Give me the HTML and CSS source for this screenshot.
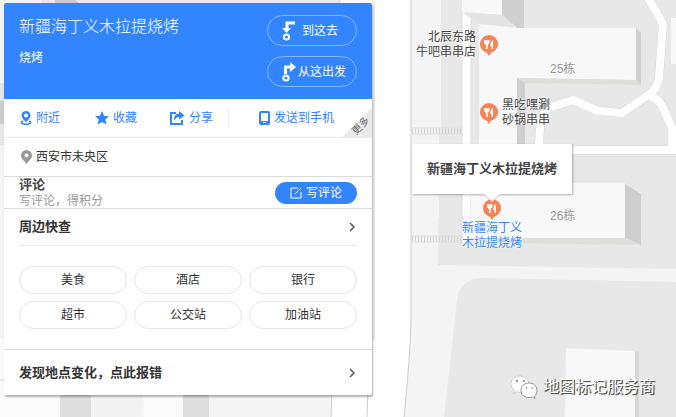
FILE: index.html
```html
<!DOCTYPE html>
<html lang="zh-CN">
<head>
    <meta charset="UTF-8">
    <meta name="viewport" content="width=device-width, initial-scale=1.0">
    <title>新疆海丁义木拉提烧烤</title>
    <link rel="stylesheet" href="styles.css">
</head>
<body>
    <svg class="map" viewBox="0 0 676 417" preserveAspectRatio="xMinYMin slice" aria-hidden="true">
        <rect width="676" height="417" fill="#ffffff"/>
        <!-- left block -->
        <path d="M0 0H339V417H0z" fill="#f4f4f4"/>
        <path d="M41 0H340V4H41z" fill="#e8e8e8"/>
        <path d="M55 0H75L80 4H55z" fill="#cccccc"/>
        <path d="M0 83H5V145H0z" fill="#e6e6e6"/>
        <path d="M0 101H5V124H0z" fill="#cccccc"/>
        <path d="M0 339H60V417H0zM143 390H183V417H144z" fill="#fbfbfb"/>
        <path d="M91 390H143V417H91z" fill="#f3f3f3"/>
        <path d="M60 390H91V417H60zM183 390H209V417H183z" fill="#dedede"/>
        <path d="M0 380H5" stroke="#cccccc"/>
        <path d="M332 390H368V417H331z" fill="#ffffff"/>
        <path d="M332 390L331 417M368 390L367 417" stroke="#cccccc" fill="none"/>
        <path d="M340 0V4M374 0V340" stroke="#d4d4d4" fill="none"/>

        <!-- right block -->
        <path d="M411 0H676V417H404Q410 360 411 320z" fill="#f4f4f4"/>
        <path d="M411 0V320Q410 360 404 417" stroke="#cccccc" fill="none"/>
        <path d="M441 0H676V269L438 265V218H439V130H441z" fill="#e8e8e8"/>
        <path d="M482 278L676 282V417H444L457 300Q460 279 482 278z" fill="#e8e8e8"/>
        <path d="M462 12H471V243H462z" fill="#ffffff"/>
        <path d="M462 12V243M471 15V243" stroke="#dddddd" fill="none"/>
        <path d="M412 131H462M412 239H462" stroke="#d6cfc9" stroke-width="5" stroke-dasharray="1 2"/>
        <path d="M412 128H462M412 134H462M412 236H462M412 242H462" stroke="#dddddd" fill="none"/>

        <!-- footpaths -->
        <g fill="none" stroke-linejoin="round">
            <path d="M647 -4L663 24L659 78Q657 90 647 96L622 113L598 111L573 100L548 108Q539 114 539 152M530 150H676M650 97Q659 98 663 108L672 128V152" stroke="#d8d8d8" stroke-width="9"/>
            <path d="M647 -4L663 24L659 78Q657 90 647 96L622 113L598 111L573 100L548 108Q539 114 539 150M530 150H676M650 97Q659 98 663 108L672 128V150" stroke="#ffffff" stroke-width="8"/>
        </g>

        <!-- buildings -->
        <path d="M462 0H502V15L462 12z" fill="#f8f8f8"/>
        <path d="M502 0H524V28H517L502 15z" fill="#cfcfcf"/>
        <path d="M462 12L502 15L517 27L479 24z" fill="#e4e4e2"/>
        <path d="M479 24L517 28H636V80L517 78V190H479z" fill="#f8f8f8"/>
        <path d="M636 28L641 33V85L636 80z" fill="#d0d0ce"/>
        <path d="M517 78L636 80L641 85L525 83z" fill="#dededb"/>
        <path d="M517 78L525 83V170H517z" fill="#cfcfcf"/>
        <path d="M671 18H676V64H671z" fill="#f8f8f8"/>
        <path d="M471 183H625V238H471z" fill="#f8f8f8"/>
        <path d="M625 184L641 194V245L625 238z" fill="#cecece"/>
        <path d="M471 238H625L641 245L482 243z" fill="#dededb"/>
        <path d="M566 348L635 351V417H565z" fill="#f8f8f8"/>
        <path d="M635 351L639 352V417H635z" fill="#d8d8d8"/>
    </svg>

    <svg class="symbols" aria-hidden="true">
        <symbol id="food" viewBox="0 0 18 21">
            <path d="M9 0A9 9 0 0 0 0 9C0 13 3 16.500 7 17.700L9 21L11 17.700C15 16.500 18 13 18 9A9 9 0 0 0 9 0z" fill="#f98353"/>
            <path d="M4 5H9.500V8L7.700 10V14H5.900V10L4 8zM13 5V14H11.500V11H10.300Q10.300 6.500 13 5z" fill="#ffffff"/>
            <path d="M5.900 5V7M7.700 5V7" stroke="#fbb698" stroke-width=".5"/>
        </symbol>
        <symbol id="arrow" viewBox="0 0 6 10">
            <path d="M1 1L5 5L1 9" fill="none" stroke="#555555" stroke-width="1.500"/>
        </symbol>
    </svg>

    <main class="card">
        <header class="card-header">
            <div>
                <h1>新疆海丁义木拉提烧烤</h1>
                <p>烧烤</p>
            </div>
            <div class="routes">
                <button type="button">
                    <svg width="14" height="20" viewBox="0 0 14 20"><path d="M13 2H5V8" fill="none" stroke="#fff" stroke-width="3"/><path d="M0 7H9L4.500 12z" fill="#fff"/><circle cx="4.500" cy="16" r="2.600" fill="none" stroke="#fff" stroke-width="2"/></svg>
                    到这去
                </button>
                <button type="button" class="from">
                    <svg width="14" height="20" viewBox="0 0 14 20"><path d="M3.500 12V5H9" fill="none" stroke="#fff" stroke-width="3"/><path d="M8 0L14 5L8 10z" fill="#fff"/><circle cx="4" cy="16" r="2.600" fill="none" stroke="#fff" stroke-width="2"/></svg>
                    从这出发
                </button>
            </div>
        </header>

        <nav class="tools">
            <a href="#nearby">
                <svg width="12" height="14" viewBox="0 0 12 14"><path d="M6 0A4.500 4.500 0 0 0 1.500 4.500C1.500 7.500 4.500 9 6 11.500C7.500 9 10.500 7.500 10.500 4.500A4.500 4.500 0 0 0 6 0zM6 2.500A2 2 0 1 1 6 6.500A2 2 0 1 1 6 2.500z" fill="#3385ff" fill-rule="evenodd"/><path d="M3 10Q1 11 1.500 12Q2.500 13.300 6 13.300T10.500 12Q11 11 9 10" fill="none" stroke="#3385ff" stroke-width="1.500"/></svg>
                附近
            </a>
            <a href="#favorite">
                <svg width="14" height="14" viewBox="0 0 14 14"><path d="M7 0L9.100 4.700L14 5.200L10.300 8.500L11.400 13.400L7 10.900L2.600 13.400L3.700 8.500L0 5.200L4.900 4.700z" fill="#3385ff"/></svg>
                收藏
            </a>
            <a href="#share">
                <svg width="15" height="14" viewBox="0 0 15 14"><path d="M6 2H1V13H12V9" fill="none" stroke="#3385ff" stroke-width="2"/><path d="M9 0L14.500 4.500L9 8.500V6Q5.500 6 4 10Q3.500 2.500 9 2.500z" fill="#3385ff"/></svg>
                分享
            </a>
            <a href="#phone" class="send">
                <svg width="11" height="14" viewBox="0 0 11 14"><rect x="1" y="1" width="9" height="12" rx="1" fill="none" stroke="#3385ff" stroke-width="2"/><path d="M1 10H10V13H1z" fill="#3385ff"/><path d="M4 11.500H7" stroke="#fff"/></svg>
                发送到手机
            </a>
            <a href="#more" class="more"><span>更多</span></a>
        </nav>

        <section class="address">
            <svg width="11" height="14" viewBox="0 0 11 14"><path d="M5.500 0A5.500 5.500 0 0 0 0 5.500C0 9 4 11 5.500 14C7 11 11 9 11 5.500A5.500 5.500 0 0 0 5.500 0zM5.500 3.500A2 2 0 1 1 5.500 7.500A2 2 0 1 1 5.500 3.500z" fill="#999" fill-rule="evenodd"/></svg>
            西安市未央区
        </section>

        <section class="comment">
            <div>
                <h2>评论</h2>
                <p>写评论，得积分</p>
            </div>
            <button type="button">
                <svg width="12" height="12" viewBox="0 0 12 12"><path d="M8 1H1V11H11V5M5 7L11 1" fill="none" stroke="#fff"/></svg>
                写评论
            </button>
        </section>

        <section class="around">
            <a href="#around" class="row">周边快查<svg width="6" height="10"><use href="#arrow"/></svg></a>
            <div class="chips">
                <button type="button">美食</button>
                <button type="button">酒店</button>
                <button type="button">银行</button>
                <button type="button">超市</button>
                <button type="button">公交站</button>
                <button type="button">加油站</button>
            </div>
        </section>

        <a href="#report" class="row report">发现地点变化，点此报错<svg width="6" height="10"><use href="#arrow"/></svg></a>
    </main>

    <!-- points on the map -->
    <div class="poi poi-niuba">
        <span>北辰东路<br>牛吧串串店</span>
        <svg width="18" height="21"><use href="#food"/></svg>
    </div>
    <div class="poi poi-shaguo">
        <svg width="18" height="21"><use href="#food"/></svg>
        <span>黑吃嘿涮<br>砂锅串串</span>
    </div>
    <div class="poi poi-current">
        <svg width="18" height="21"><use href="#food"/></svg>
        <span>新疆海丁义<br>木拉提烧烤</span>
    </div>
    <span class="building building-25">25栋</span>
    <span class="building building-26">26栋</span>
    <div class="callout">新疆海丁义木拉提烧烤</div>

    <div class="watermark">
        <svg width="28" height="24" viewBox="0 0 28 24">
            <path d="M10 1C4.500 1 1 4.800 1 9C1 12 2.500 14 4.500 15.500L3.500 18.500L7 16.700Q10 17.500 12 17C18 16 19 12 19 9C19 4.800 15 1 10 1z" fill="#fff" stroke="#aaa" stroke-width=".5"/>
            <path d="M19 8C14 8 11 11.500 11 15.500S14 22.500 19 22.500L22 22L25 23.500L24.500 21C26 20 27 18 27 15.500C27 11.500 24 8 19 8z" fill="#fff" stroke="#777" stroke-width=".8"/>
            <g fill="#777"><circle cx="7" cy="6" r="1"/><circle cx="14" cy="6" r="1"/><circle cx="16.500" cy="13" r=".8"/><circle cx="22" cy="13" r=".8"/></g>
        </svg>
        地图标记服务商
    </div>
</body>
</html>
```
FILE: styles.css
```css
* {
    box-sizing: border-box;
}

body {
    margin: 0;
    padding: 3px 4px;
    min-height: 100vh;
    position: relative;
    overflow: hidden;
    background: #ffffff;
    color: #333333;
    font-family: "Liberation Sans", "Noto Sans CJK SC", sans-serif;
    font-size: 12px;
    line-height: 16px;
}

h1, h2, p {
    margin: 0;
}

a {
    color: inherit;
    text-decoration: none;
}

button {
    font: inherit;
    padding: 0;
    cursor: pointer;
}

.map {
    position: absolute;
    top: 0;
    left: 0;
    width: 100%;
    height: 100%;
}

.symbols {
    position: absolute;
    width: 0;
    height: 0;
}

/* info card */
.card {
    position: relative;
    width: 56%;
    max-width: 368px;
    background: #ffffff;
    border-radius: 2px;
    box-shadow: 1px 2px 2px rgba(0, 0, 0, 0.3);
}

.card-header {
    display: flex;
    justify-content: space-between;
    padding: 12px 15px;
    background: #3385ff;
    color: #ffffff;
    border-radius: 2px 2px 0 0;
}

.card-header h1 {
    font-size: 16px;
    font-weight: 300;
    line-height: 24px;
}

.card-header p {
    margin-top: 11px;
}

.routes {
    display: flex;
    flex-direction: column;
    gap: 10px;
    width: 90px;
}

.routes button {
    display: flex;
    align-items: center;
    gap: 6px;
    height: 31px;
    padding-left: 14px;
    border: 1px solid #85b6ff;
    border-radius: 16px;
    background: none;
    color: #ffffff;
}

.routes .from {
    gap: 2px;
}

.tools {
    display: flex;
    align-items: center;
    position: relative;
    height: 39px;
    padding-left: 16px;
    border-bottom: 1px solid #eaeaea;
    color: #3385ff;
}

.tools a {
    display: flex;
    align-items: center;
    gap: 4px;
    width: 75px;
}

.tools .send {
    width: auto;
    height: 18px;
    margin-left: -17px;
    padding-left: 30px;
    border-left: 1px solid #eaeaea;
}

.tools .more {
    position: absolute;
    right: 0;
    bottom: 0;
    width: 29px;
    height: 29px;
    background: linear-gradient(135deg, transparent 50%, #eaeaea 50%);
    color: #666666;
}

.more span {
    font-size: 10px;
    line-height: 12px;
    white-space: nowrap;
    transform: rotate(-45deg);
    margin: 7px 0 0 8px;
}

.address {
    display: flex;
    align-items: center;
    gap: 4px;
    height: 39px;
    padding-left: 17px;
    border-bottom: 1px solid #d9d9d9;
}

.comment {
    display: flex;
    align-items: center;
    justify-content: space-between;
    height: 32px;
    padding: 0 15px;
    border-bottom: 1px solid #d9d9d9;
    color: #999999;
}

.comment h2 {
    font-size: 13px;
    line-height: 16px;
    color: #444444;
}

.comment button {
    display: flex;
    align-items: center;
    justify-content: center;
    gap: 4px;
    width: 82px;
    height: 22px;
    border: none;
    border-radius: 11px;
    background: #3385ff;
    color: #ffffff;
}

.around {
    padding: 0 15px 20px;
    border-bottom: 1px solid #d9d9d9;
}

.row {
    display: flex;
    align-items: center;
    justify-content: space-between;
    height: 37px;
    padding-right: 2px;
    border-bottom: 1px solid #eaeaea;
    font-size: 13px;
    font-weight: bold;
}

.chips {
    display: grid;
    grid-template-columns: repeat(3, 1fr);
    gap: 7px;
    margin-top: 20px;
}

.chips button {
    height: 28px;
    border: 1px solid #e6e6e6;
    border-radius: 14px;
    background: #ffffff;
    color: #333333;
}

.report {
    height: 45px;
    padding: 0 17px 0 15px;
    border: none;
}

/* map labels */
.poi {
    position: absolute;
    display: flex;
    align-items: center;
    gap: 4px;
    line-height: 15px;
    color: #444444;
    text-shadow: 0 0 2px #ffffff, 0 0 2px #ffffff;
    white-space: nowrap;
}

.poi-niuba {
    left: 416px;
    top: 30px;
    text-align: right;
}

.poi-shaguo {
    left: 480px;
    top: 98px;
}

.poi-current {
    left: 462px;
    top: 199px;
    flex-direction: column;
    gap: 1px;
    color: #3385ff;
}

.building {
    position: absolute;
    left: 550px;
    color: #999999;
}

.building-25 {
    top: 61px;
}

.building-26 {
    top: 208px;
}

.callout {
    position: absolute;
    left: 412px;
    top: 144px;
    padding: 17px 15px;
    background: #ffffff;
    box-shadow: 1px 1px 2px rgba(0, 0, 0, 0.3);
    color: #444444;
    font-size: 13px;
    font-weight: bold;
    white-space: nowrap;
}

.callout::after {
    content: "";
    position: absolute;
    left: 72px;
    top: 100%;
    border: 8px solid transparent;
    border-top: 7px solid #ffffff;
    border-bottom: none;
    filter: drop-shadow(0 1px 0 #cccccc);
}

.watermark {
    position: absolute;
    right: 21px;
    bottom: 18px;
    display: flex;
    align-items: center;
    gap: 5px;
    color: #ffffff;
    font-size: 16px;
    line-height: 24px;
    text-shadow: 1px 1px 0 #555555, 1px 1px 1px #444444;
}
```
